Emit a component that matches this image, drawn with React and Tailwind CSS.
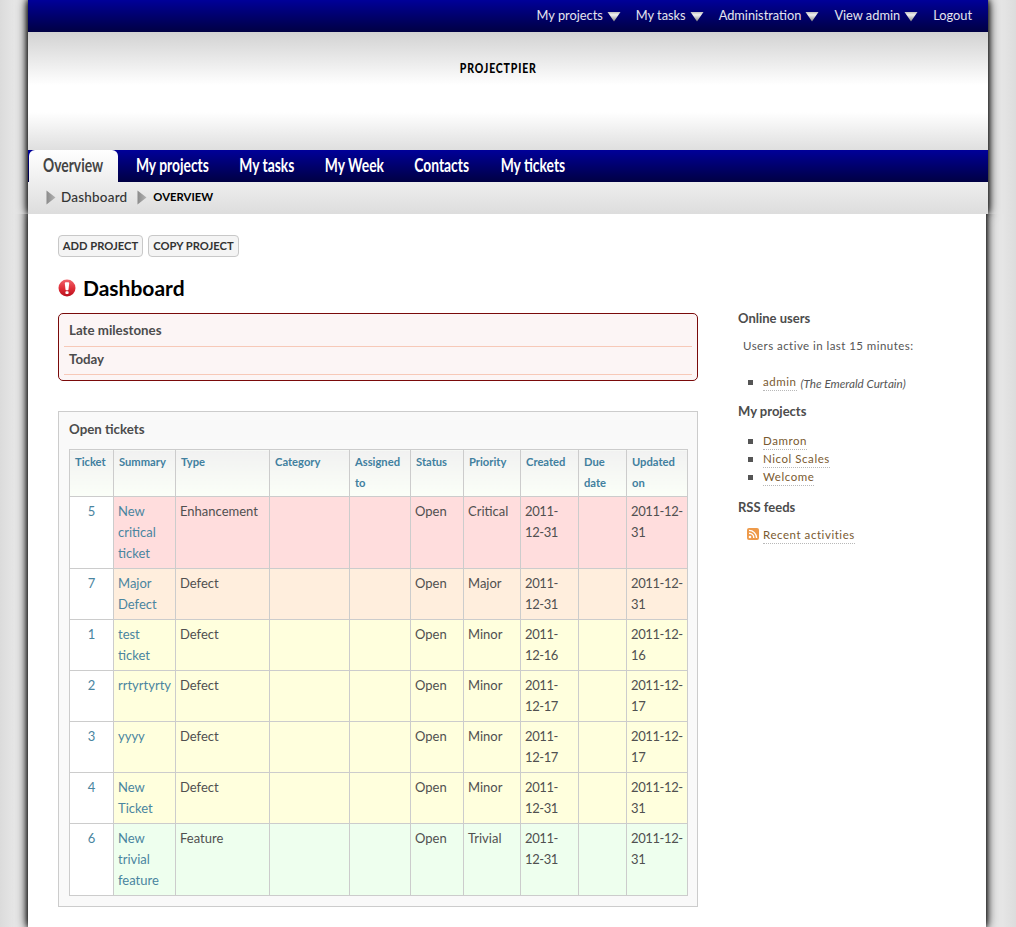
import React from "react";

const sans = "font-['Lato','Open_Sans',sans-serif]";

function DownArrow() {
  return (
    <svg width="14" height="11" viewBox="0 0 14 11" className="ml-[4px] mt-[2px] shrink-0">
      <defs>
        <linearGradient id="da" x1="0" y1="0" x2="0" y2="1">
          <stop offset="0" stopColor="#bdbdbd" />
          <stop offset="0.3" stopColor="#f2f2f2" />
          <stop offset="1" stopColor="#858585" />
        </linearGradient>
      </defs>
      <path d="M0.5 1h13L7 10.5z" fill="url(#da)" />
    </svg>
  );
}

function RightArrow() {
  return (
    <svg width="10" height="15" viewBox="0 0 10 15" className="shrink-0">
      <defs>
        <linearGradient id="ra" x1="0" y1="0" x2="1" y2="0">
          <stop offset="0" stopColor="#8a8a8a" />
          <stop offset="1" stopColor="#b4b4b4" />
        </linearGradient>
      </defs>
      <path d="M0.5 0.5v14L9.5 7.5z" fill="url(#ra)" />
    </svg>
  );
}

function AlertIcon() {
  return (
    <svg width="18" height="18" viewBox="0 0 18 18" className="shrink-0">
      <defs>
        <linearGradient id="al" x1="0" y1="0" x2="0" y2="1">
          <stop offset="0" stopColor="#f0626a" />
          <stop offset="0.55" stopColor="#de2c36" />
          <stop offset="1" stopColor="#b80f1c" />
        </linearGradient>
      </defs>
      <circle cx="9" cy="9" r="8.5" fill="url(#al)" />
      <path d="M6.8 4.2a1 1 0 0 1 1-1h2.4a1 1 0 0 1 1 1l-.7 6.3a.8.8 0 0 1-.8.7H8.3a.8.8 0 0 1-.8-.7z" fill="#fff" />
      <rect x="7.4" y="12.2" width="3.2" height="2.8" rx="1" fill="#fff" />
    </svg>
  );
}

function RssIcon() {
  return (
    <svg width="12" height="12" viewBox="0 0 12 12" className="shrink-0">
      <rect width="12" height="12" rx="2" fill="#ee9a4a" />
      <circle cx="3" cy="9" r="1.3" fill="#fff" />
      <path d="M2 5.2a4.8 4.8 0 0 1 4.8 4.8M2 2.4A7.6 7.6 0 0 1 9.6 10" fill="none" stroke="#fff" strokeWidth="1.4" />
    </svg>
  );
}

const topItems = [
  ["My projects", true],
  ["My tasks", true],
  ["Administration", true],
  ["View admin", true],
  ["Logout", false],
];

const tabs = [
  ["My projects", "w-[72px]"],
  ["My tasks", "w-[54px]"],
  ["My Week", "w-[56px]"],
  ["Contacts", "w-[55px]"],
  ["My tickets", "w-[64px]"],
];

const colWidths = ["w-[44px]", "w-[62px]", "w-[94px]", "w-[80px]", "w-[61px]", "w-[53px]", "w-[57px]", "w-[58px]", "w-[48px]", "w-[61px]"];
const headers = ["Ticket", "Summary", "Type", "Category", "Assigned to", "Status", "Priority", "Created", "Due date", "Updated on"];

const rows = [
  { id: 5, s: "New critical ticket", t: "Enhancement", p: "Critical", c: "2011-12-31", u: "2011-12-31", bg: "bg-[#ffdddd]" },
  { id: 7, s: "Major Defect", t: "Defect", p: "Major", c: "2011-12-31", u: "2011-12-31", bg: "bg-[#ffeedd]" },
  { id: 1, s: "test ticket", t: "Defect", p: "Minor", c: "2011-12-16", u: "2011-12-16", bg: "bg-[#ffffdd]" },
  { id: 2, s: "rrtyrtyrty", t: "Defect", p: "Minor", c: "2011-12-17", u: "2011-12-17", bg: "bg-[#ffffdd]" },
  { id: 3, s: "yyyy", t: "Defect", p: "Minor", c: "2011-12-17", u: "2011-12-17", bg: "bg-[#ffffdd]" },
  { id: 4, s: "New Ticket", t: "Defect", p: "Minor", c: "2011-12-31", u: "2011-12-31", bg: "bg-[#ffffdd]" },
  { id: 6, s: "New trivial feature", t: "Feature", p: "Trivial", c: "2011-12-31", u: "2011-12-31", bg: "bg-[#eeffee]" },
];

const cell = "border border-[#cccccc] align-top px-[4px] pt-[4px] pb-[4px] text-[13px] leading-[21px]";
const plain = "text-[#505050]";
const link = "text-[#4a85a0]";

function SideLink({ children }) {
  return <a className="text-[#7a5a30] tracking-[0.55px] border-b border-dotted border-[#b8b8b8]">{children}</a>;
}

function Bullet() {
  return <span className="w-[5px] h-[5px] bg-[#555] shrink-0 mr-[10px] ml-[10px]" />;
}

export default function App() {
  return (
    <div className={`${sans} h-[927px] overflow-hidden bg-[linear-gradient(to_right,#dbdbdb,#e6e6e6_14px,#e6e6e6_1002px,#dcdcdc)] pl-[28px] text-[#444]`}>
      <div className="w-[960px] h-full flex flex-col">
        <div className="relative z-10 shadow-[0_0_11px_#000,0_0_6px_#000]">
          <div className="h-[32px] bg-gradient-to-b from-[#000099] to-[#000044] flex justify-end items-center pr-[16px] text-[12.8px] text-[#e4e4f0] gap-[15px] pb-[1px]">
            {topItems.map(([label, arrow]) => (
              <span key={label} className="flex items-center">
                {label}
                {arrow && <DownArrow />}
              </span>
            ))}
          </div>
          <div className="h-[118px] bg-[linear-gradient(to_bottom,#d2d2d2_0%,#ffffff_45%,#ffffff_68%,#dfdfdf_100%)] flex justify-center pt-[28px]">
            <span className="mr-[19px] text-[14px] font-black text-black tracking-[1.1px] leading-[16px] whitespace-nowrap scale-x-[0.75]">PROJECTPIER</span>
          </div>
          <div className="h-[32px] bg-gradient-to-b from-[#000099] to-[#000044] flex pl-[1px]">
            <div className="w-[89px] h-[32px] rounded-t-[6px] bg-gradient-to-b from-white to-[#eeeeee] flex items-center justify-center text-[#444] text-[18px] font-bold pb-[2px]">
              <span className="inline-block whitespace-nowrap scale-x-[0.77]">Overview</span>
            </div>
            <div className="flex items-center text-white text-[18px] font-bold ml-[18px] gap-[32px] pb-[2px]">
              {tabs.map(([t, w]) => (
                <span key={t} className={`${w} flex justify-center`}>
                  <span className="inline-block shrink-0 whitespace-nowrap scale-x-[0.77]">{t}</span>
                </span>
              ))}
            </div>
          </div>
          <div className="h-[32px] bg-gradient-to-b from-[#eeeeee] to-[#dddddd] flex items-center pl-[18px] pb-[2px]">
            <RightArrow />
            <span className="ml-[5px] text-[13.5px] font-medium text-[#333] tracking-[0.2px]">Dashboard</span>
            <span className="ml-[10px]"><RightArrow /></span>
            <span className="ml-[6px] text-[11.3px] font-bold text-black">OVERVIEW</span>
          </div>
        </div>

        <div className="relative z-20 flex-1 w-[958px] bg-white shadow-[0_0_11px_#000,0_0_6px_#000] [clip-path:inset(0_-20px_0_-20px)] px-[30px] pt-[21px]">
          <div className="flex gap-[5px]">
            <span className="h-[22px] w-[85px] border border-[#c8c8c8] rounded-[4px] bg-[#f4f4f4] flex items-center justify-center text-[11.2px] font-bold text-[#333]">ADD PROJECT</span>
            <span className="h-[22px] w-[91px] border border-[#c8c8c8] rounded-[4px] bg-[#f4f4f4] flex items-center justify-center text-[11.2px] font-bold text-[#333]">COPY PROJECT</span>
          </div>
          <div className="flex items-center mt-[20px] h-[22px]">
            <AlertIcon />
            <span className="ml-[7px] text-[21px] font-bold text-black leading-[22px]">Dashboard</span>
          </div>
          <div className="flex mt-[14px]">
            <div className="w-[640px] shrink-0">
              <div className="h-[68px] border border-[#7a0a0a] rounded-[5px] bg-[#fcf5f5] px-[5px] pt-[4px] text-[13.3px] font-bold text-[#4c4c4c]">
                <div className="h-[29px] border-b border-[#f7c9b8] px-[5px] pb-[2px] flex items-center">Late milestones</div>
                <div className="h-[28px] border-b border-[#f7c9b8] px-[5px] pb-[2px] flex items-center">Today</div>
              </div>
              <div className="mt-[30px] border border-[#cccccc] bg-[#f9f9f9] px-[10px] pt-[7px] pb-[10px]">
                <div className="h-[20px] leading-[20px] text-[13.3px] font-bold text-[#4c4c4c] mb-[10px]">Open tickets</div>
                <table className="table-fixed border-collapse w-[618px]">
                  <colgroup>
                    {colWidths.map((w, i) => (
                      <col key={i} className={w} />
                    ))}
                  </colgroup>
                  <thead>
                    <tr>
                      {headers.map((h) => (
                        <th key={h} className="h-[47px] border border-[#cccccc] align-top text-left px-[5px] pt-[1px] pb-[2px] text-[11.2px] leading-[21px] font-bold text-[#41809f] bg-gradient-to-b from-[#f1f1f1] to-[#fbfff8]">
                          {h}
                        </th>
                      ))}
                    </tr>
                  </thead>
                  <tbody>
                    {rows.map((r) => (
                      <tr key={r.id}>
                        <td className={`${cell} bg-white text-center ${link}`}>{r.id}</td>
                        <td className={`${cell} ${r.bg} ${link}`}>{r.s}</td>
                        <td className={`${cell} ${r.bg} ${plain}`}>{r.t}</td>
                        <td className={`${cell} ${r.bg}`}></td>
                        <td className={`${cell} ${r.bg}`}></td>
                        <td className={`${cell} ${r.bg} ${plain}`}>Open</td>
                        <td className={`${cell} ${r.bg} ${plain}`}>{r.p}</td>
                        <td className={`${cell} ${r.bg} ${plain} tracking-[-0.4px]`}>{r.c}</td>
                        <td className={`${cell} ${r.bg}`}></td>
                        <td className={`${cell} ${r.bg} ${plain} pr-0 tracking-[-0.4px]`}>{r.u}</td>
                      </tr>
                    ))}
                  </tbody>
                </table>
              </div>
            </div>
            <div className="ml-[40px] w-[220px] text-[11.5px] text-[#555]">
              <div className="text-[13px] font-bold text-[#4c4c4c] leading-[18px] mt-[-4px]">Online users</div>
              <div className="mt-[11px] ml-[5px] leading-[16px] tracking-[0.45px]">Users active in last 15 minutes:</div>
              <div className="mt-[20px] flex items-center leading-[16px]">
                <Bullet />
                <SideLink>admin</SideLink>
                <i className="ml-[4px] text-[11.7px] text-[#555]">(The Emerald Curtain)</i>
              </div>
              <div className="mt-[11px] text-[13px] font-bold text-[#4c4c4c] leading-[18px]">My projects</div>
              <div className="mt-[13px] flex flex-col gap-[1px] leading-[16px]">
                {["Damron", "Nicol Scales", "Welcome"].map((n) => (
                  <div key={n} className="flex items-center">
                    <Bullet />
                    <SideLink>{n}</SideLink>
                  </div>
                ))}
              </div>
              <div className="mt-[12px] text-[13px] font-bold text-[#4c4c4c] leading-[18px]">RSS feeds</div>
              <div className="mt-[11px] ml-[9px] flex items-center leading-[16px]">
                <span className="mr-[4px] mt-[-4px]"><RssIcon /></span>
                <SideLink>Recent activities</SideLink>
              </div>
            </div>
          </div>
        </div>
      </div>
    </div>
  );
}
